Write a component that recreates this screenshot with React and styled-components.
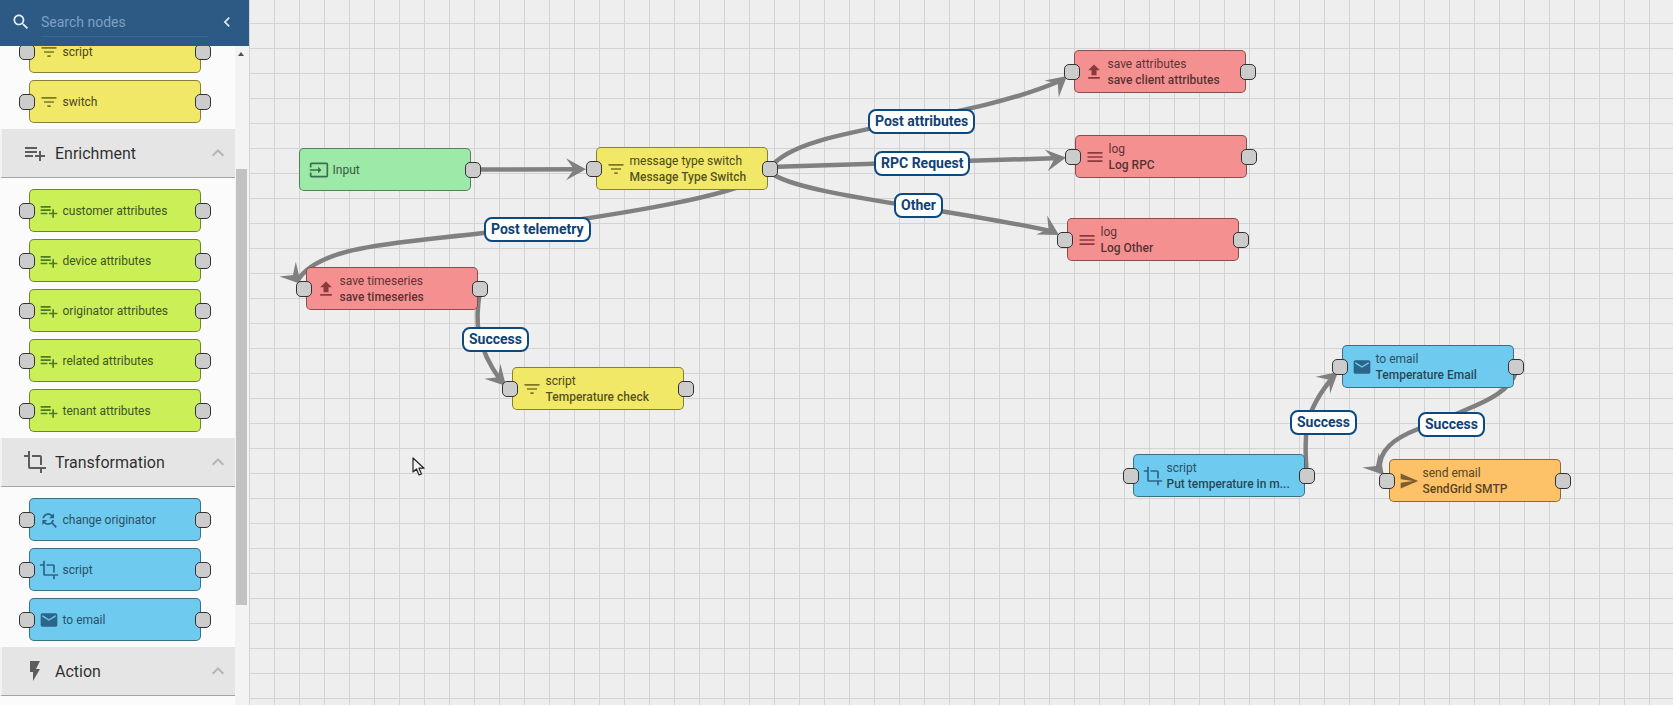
import React from "react";
import styled, { createGlobalStyle } from "styled-components";

const Global = createGlobalStyle`
  html, body { margin: 0; height: 100%; overflow: hidden; }
  body { font-family: Roboto, "Liberation Sans", sans-serif; background: #eee; }
`;

const ICONS = {
  playlist: "M14 10H2v2h12v-2zm0-4H2v2h12V6zm4 8v-4h-2v4h-4v2h4v4h2v-4h4v-2h-4zM2 16h8v-2H2v2z",
  crop: "M17 15h2V7c0-1.1-.9-2-2-2H9v2h8v8zM7 17V1H5v4H1v2h4v10c0 1.1.9 2 2 2h10v4h2v-4h4v-2H7z",
  flash: "M7 2v11h3v9l7-12h-4l4-8z",
  filter: "M10 18h4v-2h-4v2zM3 6v2h18V6H3zm3 7h12v-2H6v2z",
  input: "M21 3.01H3c-1.1 0-2 .9-2 2V9h2V4.99h18v14.03H3V15H1v4.01c0 1.1.9 1.98 2 1.98h18c1.1 0 2-.88 2-1.98v-14c0-1.1-.9-2-2-2zM11 16l4-4-4-4v3H1v2h10v3z",
  upload: "M9 16h6v-6h4l-7-7-7 7h4zm-4 2h14v2H5z",
  menu: "M3 18h18v-2H3v2zm0-5h18v-2H3v2zm0-7v2h18V6H3z",
  email: "M20 4H4c-1.1 0-1.99.9-1.99 2L2 18c0 1.1.9 2 2 2h16c1.1 0 2-.9 2-2V6c0-1.1-.9-2-2-2zm0 4l-8 5-8-5V6l8 5 8-5v2z",
  send: "M2.01 21L23 12 2.01 3 2 10l15 2-15 2z",
  findReplace: "M11 6c1.38 0 2.63.56 3.54 1.46L12 10h6V4l-2.05 2.05C14.68 4.78 12.93 4 11 4c-3.53 0-6.43 2.61-6.92 6H6.1c.46-2.28 2.48-4 4.9-4zm5.64 9.14c.66-.9 1.12-1.97 1.28-3.14H15.9c-.46 2.28-2.48 4-4.9 4-1.38 0-2.63-.56-3.54-1.46L10 12H4v6l2.05-2.05C7.32 17.22 9.07 18 11 18c1.55 0 2.98-.51 4.14-1.36L20 21.49 21.49 20l-4.85-4.86z",
  search: "M15.5 14h-.79l-.28-.27C15.41 12.59 16 11.11 16 9.5 16 5.91 13.09 3 9.5 3S3 5.91 3 9.5 5.91 16 9.5 16c1.61 0 3.09-.59 4.23-1.57l.27.28v.79l5 4.99L20.49 19l-4.99-5zm-6 0C7.01 14 5 11.99 5 9.5S7.01 5 9.5 5 14 7.01 14 9.5 11.99 14 9.5 14z",
  chevronLeft: "M15.41 7.41L14 6l-6 6 6 6 1.41-1.41L10.83 12z",
  expandLess: "M12 8l-6 6 1.41 1.41L12 10.83l4.59 4.58L18 14z",
};

const KINDS = {
  filter: { bg: "#f2e867", icon: "#7f7826", ink: "#4a4720" },
  enrichment: { bg: "#cbf057", icon: "#4d7a25", ink: "#3f5325" },
  transform: { bg: "#6fcaef", icon: "#2c6587", ink: "#2a4f68" },
  action: { bg: "#f59090", icon: "#8a3a3c", ink: "#5e3335" },
  external: { bg: "#fdc267", icon: "#7c5e35", ink: "#54422a" },
  input: { bg: "#9ce9a8", icon: "#37704d", ink: "#37583f" },
};

const Page = styled.div`
  display: flex;
  width: 100%;
  height: 100vh;
  overflow: hidden;
`;

const Sidebar = styled.aside`
  flex: 0 0 249px;
  display: flex;
  flex-direction: column;
  background: #f3f3f3;
  overflow: hidden;
`;

const SearchBar = styled.div`
  flex: 0 0 46px;
  position: relative;
  z-index: 2;
  display: flex;
  align-items: flex-start;
  background: #2c5a85;
`;

const SearchIcon = styled.svg`
  flex: none;
  width: 20px;
  height: 20px;
  margin: 12px 0 0 11px;
  fill: #e8f0f6;
`;

const SearchInput = styled.input`
  flex: none;
  width: 167px;
  height: 37px;
  margin-left: 10px;
  padding: 7px 0 0;
  box-sizing: border-box;
  background: transparent;
  border: 0;
  border-bottom: 1px solid #376793;
  outline: none;
  font: 400 14px Roboto, sans-serif;
  color: #fff;
  &::placeholder { color: #7ea0c2; opacity: 1; }
`;

const CollapseIcon = styled.svg`
  flex: none;
  width: 20px;
  height: 20px;
  margin: 12px 0 0 9px;
  fill: #dfe8f0;
`;

const SidebarBody = styled.div`
  flex: 1;
  min-height: 0;
  display: flex;
`;

const NodeList = styled.div`
  flex: 0 0 235px;
  overflow: hidden;
  background: #fbfbfb;
`;

const ScrollTrack = styled.div`
  flex: 0 0 12px;
  position: relative;
  background: #f3f3f3;
`;

const ScrollArrow = styled.div`
  width: 0;
  height: 0;
  margin: 6px 0 0 3px;
  border-left: 3.5px solid transparent;
  border-right: 3.5px solid transparent;
  border-bottom: 4px solid #505050;
`;

const ScrollThumb = styled.div`
  position: absolute;
  left: 1px;
  top: 123px;
  width: 11px;
  height: 436px;
  background: #c2c2c2;
`;

const ItemGroup = styled.div`
  display: flex;
  flex-direction: column;
  gap: 7px;
  padding: 11px 0 6px 29px;
  &:first-child { margin-top: -16px; padding-top: 0; }
`;

const SectionHeader = styled.div`
  display: flex;
  align-items: center;
  height: 49px;
  box-sizing: border-box;
  padding: 0 5px 0 21px;
  background: #e5e5e5;
  border-left: 2px solid #f3f3f3;
  border-bottom: 1px solid #a3a3a3;
`;

const SectionIcon = styled.svg`
  flex: none;
  width: 24px;
  height: 24px;
  fill: #5c5c5c;
`;

const SectionTitle = styled.span`
  flex: 1;
  margin-left: 8px;
  font-size: 16px;
  color: rgba(0, 0, 0, 0.82);
`;

const SectionChevron = styled.svg`
  flex: none;
  width: 24px;
  height: 24px;
  fill: #b4b4b4;
`;

const Node = styled.div`
  position: relative;
  display: flex;
  align-items: center;
  width: 172px;
  height: 43px;
  box-sizing: border-box;
  padding-left: 9px;
  border: 1px solid rgba(0, 0, 0, 0.45);
  border-radius: 5px;
  background: ${(p) => KINDS[p.$kind].bg};
  color: ${(p) => KINDS[p.$kind].ink};
  font-size: 12px;
  line-height: 16px;
`;

const CanvasNode = styled(Node)`
  position: absolute;
  left: ${(p) => p.$x}px;
  top: ${(p) => p.$y}px;
  z-index: 2;
`;

const NodeIcon = styled.svg`
  flex: none;
  width: 20px;
  height: 20px;
  fill: ${(p) => KINDS[p.$kind].icon};
`;

const NodeText = styled.div`
  margin-left: 3.5px;
`;

const NodeType = styled.div`
  white-space: nowrap;
`;

const NodeName = styled.div`
  font-weight: 500;
  color: rgba(0, 0, 0, 0.68);
  white-space: nowrap;
`;

const Port = styled.span`
  position: absolute;
  top: 50%;
  ${(p) => (p.$side === "left" ? "left: -11px;" : "right: -11px;")}
  width: 16px;
  height: 16px;
  margin-top: -8px;
  box-sizing: border-box;
  border: 1px solid #333;
  border-radius: 5px;
  background: #ccc;
`;

const Canvas = styled.main`
  position: relative;
  flex: 1;
  overflow: hidden;
  background-color: #eeeeee;
  background-image:
    linear-gradient(to right, #d3d3d3 1px, transparent 1px),
    linear-gradient(to bottom, #d3d3d3 1px, transparent 1px);
  background-size: 25px 25px;
  background-position: 0 23px;
`;

const EdgeLayer = styled.svg`
  position: absolute;
  left: 0;
  top: 0;
  width: 1424px;
  height: 705px;
  z-index: 1;
`;

const EdgeLine = styled.path`
  fill: none;
  stroke: #808080;
  stroke-width: 4.5;
`;

const EdgeHead = styled.path`
  fill: #808080;
`;

const EdgeLabel = styled.div`
  position: absolute;
  left: ${(p) => p.$x}px;
  top: ${(p) => p.$y}px;
  z-index: 3;
  height: 25px;
  box-sizing: border-box;
  padding: 0 5px;
  border: 2px solid #0b4a80;
  border-radius: 8px;
  background: #fff;
  color: #0f4275;
  font-size: 14px;
  font-weight: 700;
  line-height: 21px;
  white-space: nowrap;
`;

const Pointer = styled.svg`
  position: absolute;
  left: 163px;
  top: 457px;
  width: 14px;
  height: 20px;
  z-index: 4;
`;

const Glyph = ({ as: Comp = NodeIcon, name, ...rest }) => (
  <Comp viewBox="0 0 24 24" {...rest}>
    <path d={ICONS[name]} />
  </Comp>
);

const PaletteNode = ({ kind, icon, label }) => (
  <Node $kind={kind}>
    <Port $side="left" />
    <Glyph name={icon} $kind={kind} />
    <NodeText>
      <NodeType>{label}</NodeType>
    </NodeText>
    <Port $side="right" />
  </Node>
);

const Section = ({ icon, title }) => (
  <SectionHeader>
    <Glyph as={SectionIcon} name={icon} />
    <SectionTitle>{title}</SectionTitle>
    <Glyph as={SectionChevron} name="expandLess" />
  </SectionHeader>
);

const FlowNode = ({ kind, icon, type, name, x, y, noInput }) => (
  <CanvasNode $kind={kind} $x={x} $y={y}>
    {!noInput && <Port $side="left" />}
    <Glyph name={icon} $kind={kind} />
    <NodeText>
      <NodeType>{type}</NodeType>
      {name && <NodeName>{name}</NodeName>}
    </NodeText>
    <Port $side="right" />
  </CanvasNode>
);

const PALETTE = [
  {
    items: [
      { kind: "filter", icon: "filter", label: "script" },
      { kind: "filter", icon: "filter", label: "switch" },
    ],
  },
  {
    title: "Enrichment",
    icon: "playlist",
    items: [
      { kind: "enrichment", icon: "playlist", label: "customer attributes" },
      { kind: "enrichment", icon: "playlist", label: "device attributes" },
      { kind: "enrichment", icon: "playlist", label: "originator attributes" },
      { kind: "enrichment", icon: "playlist", label: "related attributes" },
      { kind: "enrichment", icon: "playlist", label: "tenant attributes" },
    ],
  },
  {
    title: "Transformation",
    icon: "crop",
    items: [
      { kind: "transform", icon: "findReplace", label: "change originator" },
      { kind: "transform", icon: "crop", label: "script" },
      { kind: "transform", icon: "email", label: "to email" },
    ],
  },
  { title: "Action", icon: "flash", items: [] },
];

const NODES = [
  { kind: "input", icon: "input", type: "Input", x: 50, y: 148, noInput: true },
  { kind: "filter", icon: "filter", type: "message type switch", name: "Message Type Switch", x: 347, y: 147 },
  { kind: "action", icon: "upload", type: "save timeseries", name: "save timeseries", x: 57, y: 267 },
  { kind: "filter", icon: "filter", type: "script", name: "Temperature check", x: 263, y: 367 },
  { kind: "action", icon: "upload", type: "save attributes", name: "save client attributes", x: 825, y: 50 },
  { kind: "action", icon: "menu", type: "log", name: "Log RPC", x: 826, y: 135 },
  { kind: "action", icon: "menu", type: "log", name: "Log Other", x: 818, y: 218 },
  { kind: "transform", icon: "email", type: "to email", name: "Temperature Email", x: 1093, y: 345 },
  { kind: "transform", icon: "crop", type: "script", name: "Put temperature in m...", x: 884, y: 454 },
  { kind: "external", icon: "send", type: "send email", name: "SendGrid SMTP", x: 1140, y: 459 },
];

const LABELS = [
  { text: "Post attributes", x: 619, y: 109 },
  { text: "RPC Request", x: 625, y: 151 },
  { text: "Other", x: 645, y: 193 },
  { text: "Post telemetry", x: 235, y: 217 },
  { text: "Success", x: 213, y: 327 },
  { text: "Success", x: 1041, y: 410 },
  { text: "Success", x: 1169, y: 412 },
];

/* Edge paths and arrow tips are in page coordinates; the layer shifts them by the sidebar width. */
const EDGES = [
  { d: "M480 169.5 L582 169.3", tip: [586, 169.3], angle: 0 },
  { d: "M770 168 C800 125 960 125 1062 80", tip: [1067, 76], angle: -40 },
  { d: "M770 167 L1061 158", tip: [1066, 157.5], angle: -8 },
  { d: "M770 172 C795 195 950 208 1055 232", tip: [1059, 235], angle: 30 },
  { d: "M770 172 C745 195 620 215 483 233 C400 243 320 245 298 280", tip: [301, 284], angle: 48 },
  { d: "M480 291 C475 320 475 345 501 381", tip: [506, 386], angle: 47 },
  { d: "M1307 476 C1303 430 1305 410 1334 376", tip: [1338, 372], angle: -41 },
  { d: "M1516 372 C1510 390 1490 400 1463 411 C1450 417 1430 424 1418 429 C1395 438 1378 450 1380 470", tip: [1384, 475], angle: 48 },
];

export default function App() {
  return (
    <Page>
      <Global />
      <Sidebar>
        <SearchBar>
          <Glyph as={SearchIcon} name="search" />
          <SearchInput placeholder="Search nodes" />
          <Glyph as={CollapseIcon} name="chevronLeft" />
        </SearchBar>
        <SidebarBody>
          <NodeList>
            {PALETTE.map((group, i) => (
              <React.Fragment key={i}>
                {group.title && <Section icon={group.icon} title={group.title} />}
                {group.items.length > 0 && (
                  <ItemGroup>
                    {group.items.map((item) => (
                      <PaletteNode key={item.label + item.kind} {...item} />
                    ))}
                  </ItemGroup>
                )}
              </React.Fragment>
            ))}
          </NodeList>
          <ScrollTrack>
            <ScrollArrow />
            <ScrollThumb />
          </ScrollTrack>
        </SidebarBody>
      </Sidebar>
      <Canvas>
        <EdgeLayer viewBox="0 0 1424 705">
          <g transform="translate(-249 0)">
            {EDGES.map((e) => (
              <g key={e.d}>
                <EdgeLine d={e.d} />
                <EdgeHead
                  d="M0 0 L-20 -11 L-12 0 L-20 11 Z"
                  transform={`translate(${e.tip[0]} ${e.tip[1]}) rotate(${e.angle})`}
                />
              </g>
            ))}
          </g>
        </EdgeLayer>
        {NODES.map((n) => (
          <FlowNode key={n.type + n.x} {...n} />
        ))}
        {LABELS.map((l) => (
          <EdgeLabel key={l.text + l.x} $x={l.x} $y={l.y}>
            {l.text}
          </EdgeLabel>
        ))}
        <Pointer viewBox="0 0 14 20">
          <path d="M1 1 L1 15 L4.5 12 L7 18 L9.5 17 L7 11.2 L12 11.2 Z" fill="#f2f2f2" stroke="#222" strokeWidth="1.2" strokeLinejoin="round" />
        </Pointer>
      </Canvas>
    </Page>
  );
}
